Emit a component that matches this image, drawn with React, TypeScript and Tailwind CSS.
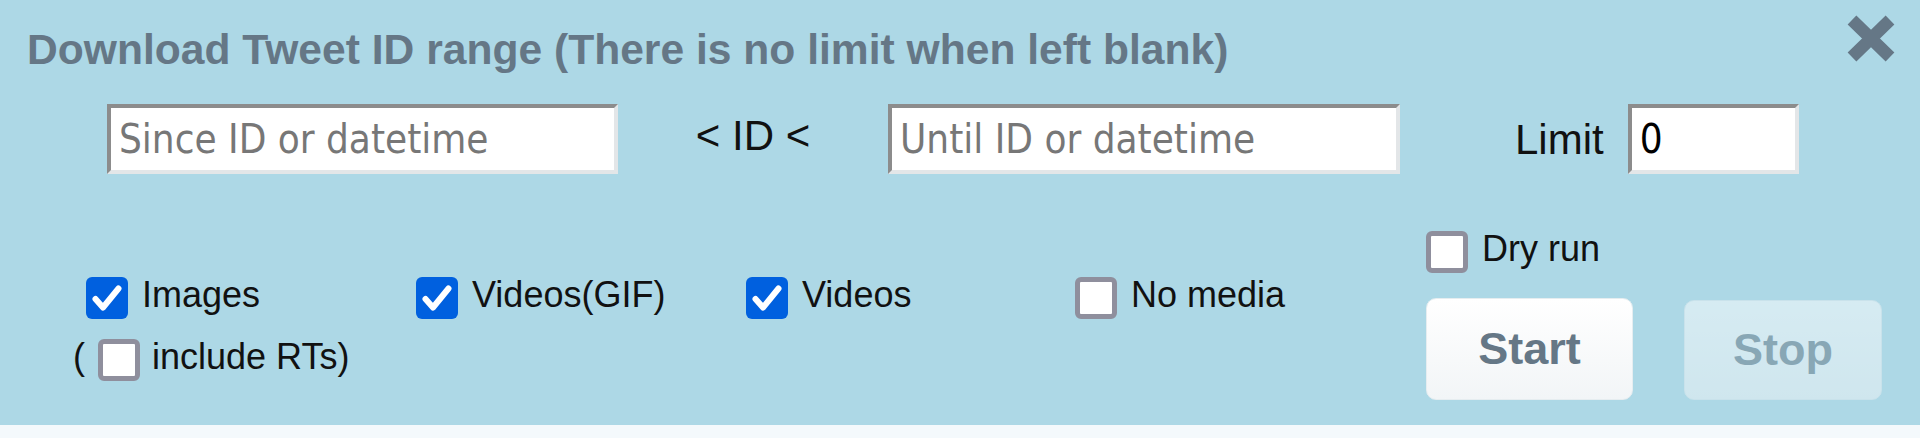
import React from "react";

function Box({ checked }: { checked: boolean }) {
  if (checked) {
    return (
      <span className="flex h-[42px] w-[42px] shrink-0 items-center justify-center rounded-[6px] bg-[#0060df]">
        <svg width="42" height="42" viewBox="0 0 42 42">
          <path d="M9.5 22 L17 30.5 L32.5 11.5" fill="none" stroke="#fff" strokeWidth="6" strokeLinecap="round" strokeLinejoin="round" />
        </svg>
      </span>
    );
  }
  return <span className="block h-[42px] w-[42px] shrink-0 rounded-[6px] border-[5px] border-[#8f8f9d] bg-white" />;
}

function Check({ label, checked }: { label: string; checked: boolean }) {
  return (
    <label className="flex items-center gap-[14px]">
      <Box checked={checked} />
      <span className="mb-[6px] text-[36px] leading-[36px] text-[#111]">{label}</span>
    </label>
  );
}

const field =
  "h-[70px] border-4 border-t-[#8c8c8c] border-l-[#8c8c8c] border-b-[#e3e6e8] border-r-[#e3e6e8] bg-white pl-[8px] font-['DejaVu_Sans_Condensed','DejaVu_Sans',sans-serif] text-[40px] text-black outline-none placeholder:text-[#777]";

export default function App() {
  return (
    <div className="font-['Liberation_Sans',Arial,sans-serif]">
      <div className="flex flex-col bg-[#add8e6] pt-[15px] pb-[25px]">
        {/* header */}
        <div className="flex items-start justify-between pl-[27px] pr-[25px]">
          <h1 className="mt-[10px] text-[42.6px] font-bold leading-[48px] text-[#657786]">
            Download Tweet ID range (There is no limit when left blank)
          </h1>
          <svg width="48" height="47" viewBox="0 0 48 47" className="shrink-0">
            <path d="M5 5 L43 42 M43 5 L5 42" stroke="#657786" strokeWidth="12.5" />
          </svg>
        </div>

        {/* id range */}
        <div className="mt-[31px] flex items-center pl-[107px] text-[42px] text-[#111]">
          <input className={`${field} w-[511px]`} placeholder="Since ID or datetime" />
          <span className="mb-[7px] w-[270px] text-center">&lt; ID &lt;</span>
          <input className={`${field} w-[512px]`} placeholder="Until ID or datetime" />
          <span className="ml-[115px]">Limit</span>
          <input className={`${field} ml-[24px] w-[171px]`} defaultValue="0" />
        </div>

        {/* options */}
        <div className="mt-[57px] flex items-start pl-[73px]">
          <div className="mt-[46px] grid grid-cols-[343px_330px_329px_351px]">
            <div className="flex flex-col gap-[20px]">
              <div className="pl-[13px]">
                <Check label="Images" checked />
              </div>
              <div className="flex items-center text-[36px] leading-[36px] text-[#111]">
                <span className="mb-[6px]">(</span>
                <span className="ml-[13px] mr-[12px]">
                  <Box checked={false} />
                </span>
                <span className="mb-[6px]">include RTs)</span>
              </div>
            </div>
            <div>
              <Check label="Videos(GIF)" checked />
            </div>
            <div>
              <Check label="Videos" checked />
            </div>
            <div>
              <Check label="No media" checked={false} />
            </div>
          </div>

          <div className="flex flex-col">
            <Check label="Dry run" checked={false} />
            <div className="mt-[25px] flex items-end gap-[51px]">
              <button className="h-[102px] w-[207px] rounded-[10px] border border-[#e6edf0] bg-gradient-to-b from-white to-[#f2f5f7] text-[45px] font-bold text-[#657786]">
                Start
              </button>
              <button
                disabled
                className="h-[100px] w-[198px] rounded-[10px] border border-[#e6edf0] bg-gradient-to-b from-white to-[#f2f5f7] text-[45px] font-bold text-[#657786] opacity-50"
              >
                Stop
              </button>
            </div>
          </div>
        </div>
      </div>
      <div className="h-[13px] bg-[#f4f9fc]" />
    </div>
  );
}
